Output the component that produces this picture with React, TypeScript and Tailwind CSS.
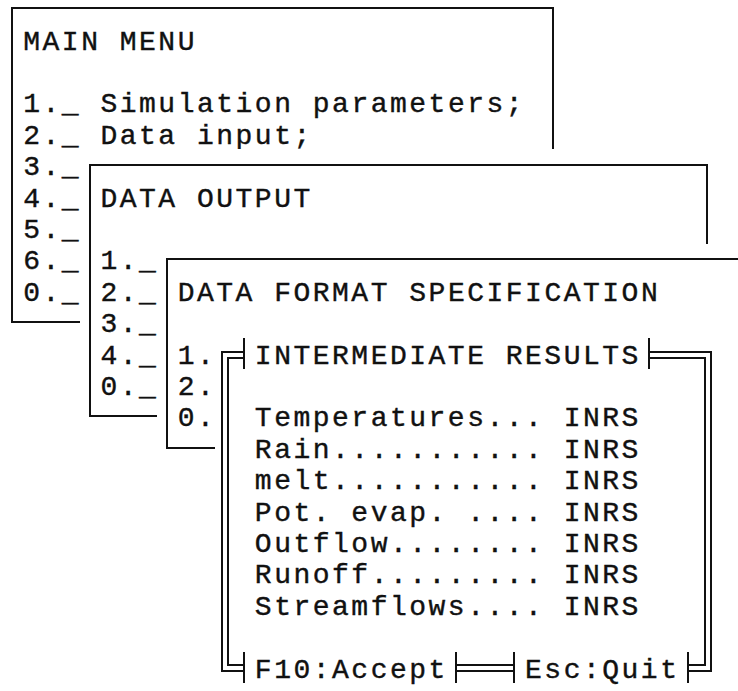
import React from "react";

function Line({ children }: { children?: React.ReactNode }) {
  return <div className="h-[31.4px] whitespace-pre">{children}</div>;
}

export default function App() {
  return (
    <div className="relative w-[738px] h-[691px] overflow-hidden bg-white text-[#111] font-['Liberation_Mono','Courier_New',monospace] text-[28px] tracking-[2.5px] leading-[31.4px] [-webkit-text-stroke:0.4px_#111]">
      {/* MAIN MENU window */}
      <div className="absolute left-[2.7px] top-[-7.7px] w-[559.7px] h-[345.4px] bg-white">
        <div className="absolute left-[8.65px] top-[14.7px] w-[542.4px] h-[316px] border-2 border-[#111]" />
        <div className="flex flex-col pl-[20.55px] pt-[31.4px] translate-y-[3px]">
          <Line>MAIN MENU</Line>
          <Line> </Line>
          <Line>1._ Simulation parameters;</Line>
          <Line>2._ Data input;</Line>
          <Line>3._</Line>
          <Line>4._</Line>
          <Line>5._</Line>
          <Line>6._</Line>
          <Line>0._</Line>
        </div>
      </div>

      {/* DATA OUTPUT window */}
      <div className="absolute left-[79.9px] top-[149.3px] w-[636.9px] h-[282.6px] bg-white">
        <div className="absolute left-[8.65px] top-[14.7px] w-[619.6px] h-[253.2px] border-2 border-[#111]" />
        <div className="flex flex-col pl-[20.55px] pt-[31.4px] translate-y-[3px]">
          <Line>DATA OUTPUT</Line>
          <Line> </Line>
          <Line>1._</Line>
          <Line>2._</Line>
          <Line>3._</Line>
          <Line>4._</Line>
          <Line>0._</Line>
        </div>
      </div>

      {/* DATA FORMAT SPECIFICATION window (extends past the right edge) */}
      <div className="absolute left-[157.1px] top-[243.5px] w-[656.2px] h-[219.8px] bg-white">
        <div className="absolute left-[8.65px] top-[14.7px] w-[638.9px] h-[190.4px] border-t-2 border-l-2 border-[#111]" />
        <div className="absolute left-[8.65px] top-[203.1px] w-[60px] h-[2px] bg-[#111]" />
        <div className="flex flex-col pl-[20.55px] pt-[31.4px] translate-y-[3px]">
          <Line>DATA FORMAT SPECIFICATION</Line>
          <Line> </Line>
          <Line>1.</Line>
          <Line>2.</Line>
          <Line>0.</Line>
        </div>
      </div>

      {/* INTERMEDIATE RESULTS window (double frame) */}
      <div className="absolute left-[215px] top-[337.7px] w-[501.8px] h-[345.4px] bg-white">
        <div className="absolute left-[5.65px] top-[13.2px] w-[491.5px] h-[321px] border-2 border-[#111] p-[4px]">
          <div className="w-full h-full border-2 border-[#111]" />
        </div>

        <div className="absolute left-[27.95px] top-0 w-[407.3px] h-[31.4px] bg-white border-x-2 border-[#111] pl-[9.9px]">
          <div className="whitespace-pre translate-y-[3px]">INTERMEDIATE RESULTS</div>
        </div>

        <div className="flex flex-col pl-[39.85px] pt-[62.8px] translate-y-[3px]">
          <Line>Temperatures... INRS</Line>
          <Line>Rain........... INRS</Line>
          <Line>melt........... INRS</Line>
          <Line>Pot. evap. .... INRS</Line>
          <Line>Outflow........ INRS</Line>
          <Line>Runoff......... INRS</Line>
          <Line>Streamflows.... INRS</Line>
        </div>

        <div className="absolute left-[27.95px] top-[314px] w-[214.3px] h-[31.4px] bg-white border-x-2 border-[#111] pl-[9.9px]">
          <div className="whitespace-pre translate-y-[3px]">F10:Accept</div>
        </div>
        <div className="absolute left-[298.15px] top-[314px] w-[175.7px] h-[31.4px] bg-white border-x-2 border-[#111] pl-[9.9px]">
          <div className="whitespace-pre translate-y-[3px]">Esc:Quit</div>
        </div>
      </div>
    </div>
  );
}
